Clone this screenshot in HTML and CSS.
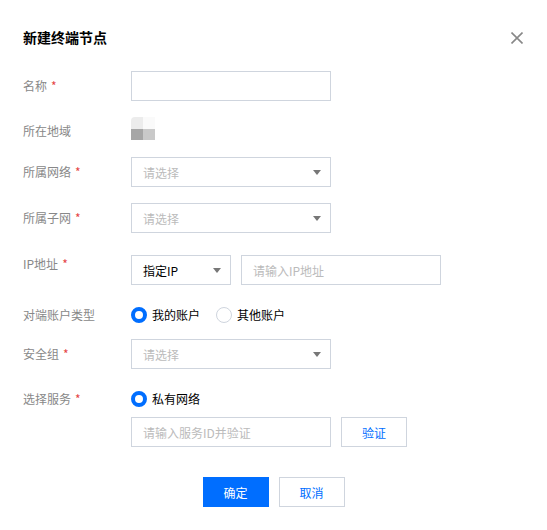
FILE: index.html
```html
<!DOCTYPE html>
<html lang="zh-CN">
<head>
    <meta charset="UTF-8">
    <meta name="viewport" content="width=device-width, initial-scale=1.0">
    <title>新建终端节点</title>
    <link rel="stylesheet" href="styles.css">
</head>
<body>
    <div class="dialog">
        <div class="dialog-header">
            <h3 class="dialog-title">新建终端节点</h3>
            <button class="dialog-close" type="button" aria-label="关闭">
                <svg width="12" height="12" viewBox="0 0 12 12">
                    <path d="M0.5 0.5 L11.5 11.5 M11.5 0.5 L0.5 11.5" stroke="#888" stroke-width="1.6" fill="none"/>
                </svg>
            </button>
        </div>

        <form class="form">
            <div class="form-row row-name">
                <label class="form-label">名称<span class="required">*</span></label>
                <div class="form-field">
                    <input class="text-input" type="text">
                </div>
            </div>

            <div class="form-row row-region">
                <label class="form-label">所在地域</label>
                <div class="form-field">
                    <div class="region-thumb">
                        <span class="q q1"></span><span class="q q2"></span>
                        <span class="q q3"></span><span class="q q4"></span>
                    </div>
                </div>
            </div>

            <div class="form-row row-vpc">
                <label class="form-label">所属网络<span class="required">*</span></label>
                <div class="form-field">
                    <div class="select"><span class="placeholder">请选择</span><span class="caret"></span></div>
                </div>
            </div>

            <div class="form-row row-subnet">
                <label class="form-label">所属子网<span class="required">*</span></label>
                <div class="form-field">
                    <div class="select"><span class="placeholder">请选择</span><span class="caret"></span></div>
                </div>
            </div>

            <div class="form-row row-ip">
                <label class="form-label label-top">IP地址<span class="required">*</span></label>
                <div class="form-field field-inline">
                    <div class="select select-short"><span class="value">指定IP</span><span class="caret"></span></div>
                    <input class="text-input" type="text" placeholder="请输入IP地址">
                </div>
            </div>

            <div class="form-row row-account">
                <label class="form-label">对端账户类型</label>
                <div class="form-field field-radios">
                    <label class="radio"><span class="radio-dot checked"></span>我的账户</label>
                    <label class="radio"><span class="radio-dot"></span>其他账户</label>
                </div>
            </div>

            <div class="form-row row-sg">
                <label class="form-label">安全组<span class="required">*</span></label>
                <div class="form-field">
                    <div class="select"><span class="placeholder">请选择</span><span class="caret"></span></div>
                </div>
            </div>

            <div class="form-row row-service">
                <label class="form-label label-short">选择服务<span class="required">*</span></label>
                <div class="form-field field-stack">
                    <label class="radio radio-line"><span class="radio-dot checked"></span>私有网络</label>
                    <div class="field-inline">
                        <input class="text-input" type="text" placeholder="请输入服务ID并验证">
                        <button class="btn btn-weak" type="button">验证</button>
                    </div>
                </div>
            </div>
        </form>

        <div class="dialog-footer">
            <button class="btn btn-primary" type="button">确定</button>
            <button class="btn btn-weak" type="button">取消</button>
        </div>
    </div>
</body>
</html>
```

FILE: styles.css
```css
body {
    margin: 0;
    padding: 0;
    background: #fff;
    font-family: "Noto Sans CJK SC", "Liberation Sans", sans-serif;
    font-size: 12px;
    color: #000;
}
.dialog {
    width: 547px;
    height: 530px;
    box-sizing: border-box;
    padding: 27px 24px 0 23px;
}
.dialog-header {
    display: flex;
    justify-content: space-between;
    align-items: center;
    height: 20px;
}
.dialog-title {
    margin: 0;
    font-size: 14px;
    line-height: 20px;
    font-weight: bold;
    color: #000;
}
.dialog-close {
    width: 12px;
    height: 12px;
    padding: 0;
    border: none;
    background: none;
    display: flex;
    cursor: pointer;
    margin-top: 2px;
}
.form {
    margin-top: 24px;
}
.form-row {
    display: flex;
    align-items: flex-start;
}
.form-label {
    width: 108px;
    flex-shrink: 0;
    color: #888;
    line-height: 30px;
    white-space: nowrap;
}
.label-top {
    line-height: 18px;
}
.label-short {
    line-height: 20px;
}
.required {
    color: #e54545;
    margin-left: 4px;
}
.form-field {
    display: flex;
    align-items: center;
    min-height: 30px;
}
.field-inline {
    display: flex;
    gap: 10px;
}
.field-radios {
    gap: 16px;
}
.field-stack {
    flex-direction: column;
    align-items: flex-start;
    gap: 8px;
}
.row-region { margin-top: 15px; }
.row-vpc { margin-top: 11px; }
.row-subnet { margin-top: 16px; }
.row-ip { margin-top: 22px; }
.row-account { margin-top: 15px; }
.row-sg { margin-top: 9px; }
.row-service { margin-top: 20px; }

.text-input, .select {
    box-sizing: border-box;
    width: 200px;
    height: 30px;
    border: 1px solid #cfd5de;
    background: #fff;
    font: inherit;
    color: #000;
    padding: 0 9px 0 11px;
    outline: none;
}
.text-input::placeholder {
    color: #bbb;
}
.select {
    display: flex;
    align-items: center;
    justify-content: space-between;
}
.select-short {
    width: 100px;
}
.placeholder {
    color: #bbb;
}
.caret {
    width: 0;
    height: 0;
    border-left: 4px solid transparent;
    border-right: 4px solid transparent;
    border-top: 5px solid #777;
}

.region-thumb {
    display: grid;
    grid-template-columns: 12px 12px;
    grid-template-rows: 12px 11px;
    margin-top: 1px;
    align-self: flex-start;
    filter: blur(0.4px);
}
.q1 { background: #ececec; border-top-left-radius: 4px; }
.q2 { background: #fafafa; }
.q3 { background: #a6a6a6; }
.q4 { background: #c9c9c9; }

.radio {
    display: flex;
    align-items: center;
    gap: 5px;
    color: #000;
    line-height: 20px;
}
.radio-dot {
    box-sizing: border-box;
    width: 16px;
    height: 16px;
    border-radius: 50%;
    border: 1px solid #cfd5de;
    background: #fff;
}
.radio-dot.checked {
    border: 4px solid #006eff;
}
.radio-line {
    height: 20px;
}

.btn {
    box-sizing: border-box;
    width: 66px;
    height: 30px;
    font: inherit;
    cursor: pointer;
}
.btn-primary {
    background: #006eff;
    border: 1px solid #006eff;
    color: #fff;
}
.btn-weak {
    background: #fff;
    border: 1px solid #cfd5de;
    color: #006eff;
}
.dialog-footer {
    display: flex;
    justify-content: center;
    gap: 10px;
    margin-top: 30px;
    margin-right: -1px;
}
```
